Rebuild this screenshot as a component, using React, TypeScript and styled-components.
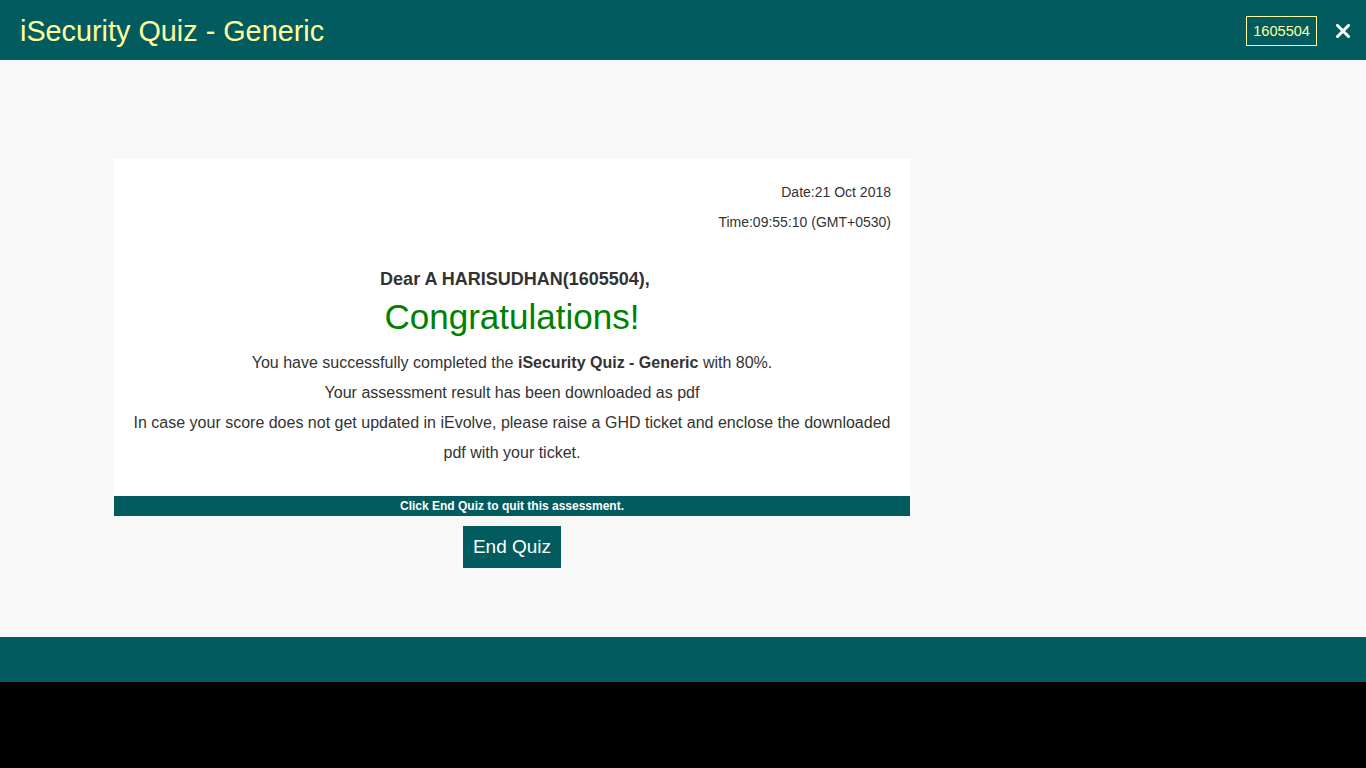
import React from "react";
import styled, { createGlobalStyle } from "styled-components";

const TEAL = "#025b5e";

const Global = createGlobalStyle`
  html, body { margin: 0; padding: 0; background: #000; }
  body { font-family: "Liberation Sans", Arial, sans-serif; color: #333; }
`;

const Page = styled.div`
  display: flex;
  flex-direction: column;
  width: 100%;
`;

const Header = styled.header`
  height: 60px;
  background: ${TEAL};
  display: flex;
  align-items: center;
  justify-content: space-between;
  padding: 0 16px 0 20px;
  box-sizing: border-box;
`;

const Title = styled.h1`
  margin: 2px 0 0;
  font-size: 28.8px;
  font-weight: normal;
  color: #ffff9e;
  letter-spacing: 0;
`;

const Right = styled.div`
  display: flex;
  align-items: center;
  gap: 19px;
`;

const Badge = styled.div`
  border: 1px solid #ffff9e;
  color: #ffff9e;
  font-size: 14.6px;
  height: 28px;
  line-height: 28px;
  padding: 0 6px;
  margin-top: 1px;
`;

const Close = styled.svg`
  width: 14px;
  height: 14px;
  display: block;
  margin-top: 2px;
`;

const Main = styled.main`
  height: 577px;
  background: #f8f8f8;
  padding: 99px 0 0 114px;
  box-sizing: border-box;
`;

const Column = styled.div`
  width: 796px;
  display: flex;
  flex-direction: column;
  align-items: center;
`;

const Card = styled.section`
  width: 100%;
  background: #fff;
  box-sizing: border-box;
  padding: 18px 19px 28px;
`;

const Meta = styled.div`
  text-align: right;
  font-size: 14px;
  line-height: 30px;
  color: #333;
`;

const Dear = styled.div`
  margin-top: 27px;
  padding-left: 6px;
  text-align: center;
  font-weight: bold;
  font-size: 18px;
  line-height: 30px;
  color: #333;
`;

const Congrats = styled.div`
  text-align: center;
  color: #008000;
  font-size: 35px;
  line-height: 40px;
  margin-top: 3px;
`;

const Body = styled.p`
  margin: 11px 0 0;
  text-align: center;
  font-size: 16px;
  line-height: 30px;
  color: #333;
`;

const Banner = styled.div`
  width: 100%;
  height: 20px;
  background: ${TEAL};
  color: #fff;
  font-weight: bold;
  font-size: 12px;
  line-height: 20px;
  text-align: center;
`;

const EndButton = styled.button`
  margin-top: 10px;
  width: 98px;
  height: 42px;
  background: ${TEAL};
  color: #fff;
  border: none;
  font-family: "Liberation Sans", Arial, sans-serif;
  font-size: 19px;
  padding: 0;
  cursor: pointer;
`;

const Footer = styled.footer`
  height: 45px;
  background: ${TEAL};
`;

export default function App() {
  return (
    <>
      <Global />
      <Page>
        <Header>
          <Title>iSecurity Quiz - Generic</Title>
          <Right>
            <Badge>1605504</Badge>
            <Close viewBox="0 0 14 14">
              <path d="M1.5 1.5 L12.5 12.5 M12.5 1.5 L1.5 12.5" stroke="#fff" strokeWidth="3" strokeLinecap="square" />
            </Close>
          </Right>
        </Header>
        <Main>
          <Column>
            <Card>
              <Meta>Date:21 Oct 2018</Meta>
              <Meta>Time:09:55:10 (GMT+0530)</Meta>
              <Dear>Dear A HARISUDHAN(1605504),</Dear>
              <Congrats>Congratulations!</Congrats>
              <Body>
                You have successfully completed the <b>iSecurity Quiz - Generic</b> with 80%.
                <br />
                Your assessment result has been downloaded as pdf
                <br />
                In case your score does not get updated in iEvolve, please raise a GHD ticket and enclose the downloaded pdf with your ticket.
              </Body>
            </Card>
            <Banner>Click End Quiz to quit this assessment.</Banner>
            <EndButton>End Quiz</EndButton>
          </Column>
        </Main>
        <Footer />
      </Page>
    </>
  );
}
